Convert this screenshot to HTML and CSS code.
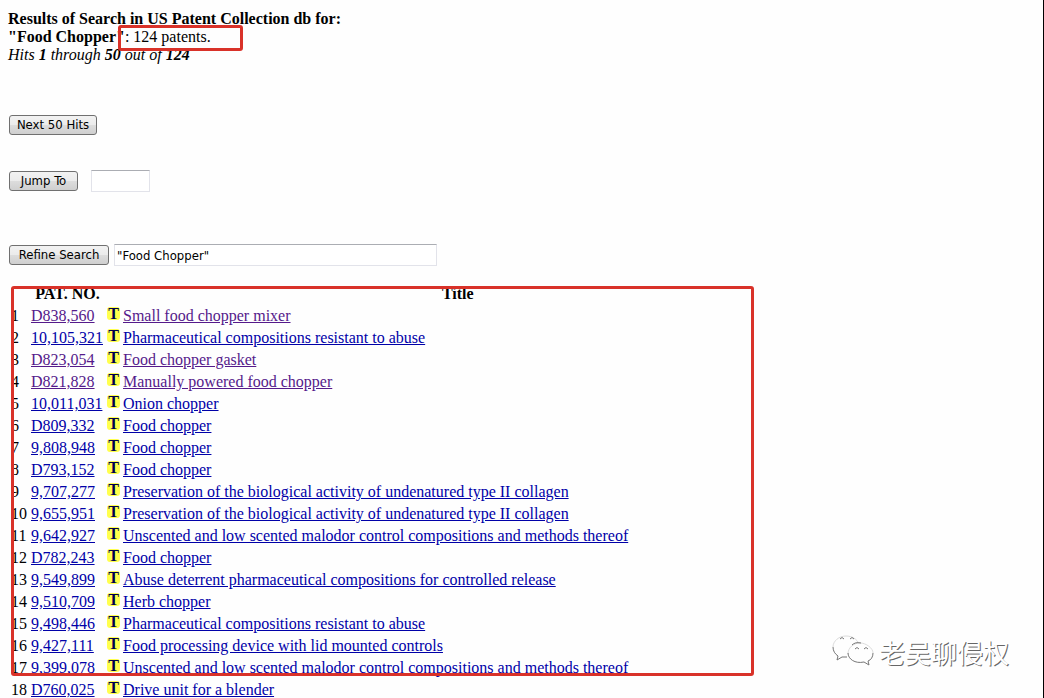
FILE: index.html
```
<!DOCTYPE html>
<html lang="en">

<head>
    <meta charset="UTF-8">
    <meta name="viewport" content="width=device-width, initial-scale=1.0">
    <title>Patent Database Search Results</title>
    <link rel="stylesheet" href="styles.css">
</head>

<body>
    <div class="summary">
        <strong>Results of Search in US Patent Collection db for:</strong><br>
        <strong>"Food Chopper"</strong><span class="count">: 124 patents.<span class="mark mark-count"></span></span><br>
        <em>Hits <strong>1</strong> through <strong>50</strong> out of <strong>124</strong></em>
    </div>

    <form class="search-form next-form">
        <button type="submit" class="next-button">Next 50 Hits</button>
    </form>
    <form class="search-form jump-form">
        <button type="submit" class="jump-button">Jump To</button>
        <input type="text" class="jump-input" name="start" aria-label="Jump to hit">
    </form>
    <form class="search-form refine-form">
        <button type="submit" class="refine-button">Refine Search</button>
        <input type="text" class="query-input" name="query" value="&quot;Food Chopper&quot;" aria-label="Refine search">
    </form>

    <div class="results">
        <table>
            <thead>
                <tr><th class="num"></th><th class="pat">PAT. NO.</th><th class="full"></th><th class="title">Title</th></tr>
            </thead>
            <tbody>
                <tr><td>1</td><td><a class="visited" href="#1">D838,560</a></td><td><span class="full-text">T</span></td><td><a class="visited" href="#1">Small food chopper mixer</a></td></tr>
                <tr><td>2</td><td><a href="#2">10,105,321</a></td><td><span class="full-text">T</span></td><td><a href="#2">Pharmaceutical compositions resistant to abuse</a></td></tr>
                <tr><td>3</td><td><a class="visited" href="#3">D823,054</a></td><td><span class="full-text">T</span></td><td><a class="visited" href="#3">Food chopper gasket</a></td></tr>
                <tr><td>4</td><td><a class="visited" href="#4">D821,828</a></td><td><span class="full-text">T</span></td><td><a class="visited" href="#4">Manually powered food chopper</a></td></tr>
                <tr><td>5</td><td><a href="#5">10,011,031</a></td><td><span class="full-text">T</span></td><td><a href="#5">Onion chopper</a></td></tr>
                <tr><td>6</td><td><a href="#6">D809,332</a></td><td><span class="full-text">T</span></td><td><a href="#6">Food chopper</a></td></tr>
                <tr><td>7</td><td><a href="#7">9,808,948</a></td><td><span class="full-text">T</span></td><td><a href="#7">Food chopper</a></td></tr>
                <tr><td>8</td><td><a href="#8">D793,152</a></td><td><span class="full-text">T</span></td><td><a href="#8">Food chopper</a></td></tr>
                <tr><td>9</td><td><a href="#9">9,707,277</a></td><td><span class="full-text">T</span></td><td><a href="#9">Preservation of the biological activity of undenatured type II collagen</a></td></tr>
                <tr><td>10</td><td><a href="#10">9,655,951</a></td><td><span class="full-text">T</span></td><td><a href="#10">Preservation of the biological activity of undenatured type II collagen</a></td></tr>
                <tr><td>11</td><td><a href="#11">9,642,927</a></td><td><span class="full-text">T</span></td><td><a href="#11">Unscented and low scented malodor control compositions and methods thereof</a></td></tr>
                <tr><td>12</td><td><a href="#12">D782,243</a></td><td><span class="full-text">T</span></td><td><a href="#12">Food chopper</a></td></tr>
                <tr><td>13</td><td><a href="#13">9,549,899</a></td><td><span class="full-text">T</span></td><td><a href="#13">Abuse deterrent pharmaceutical compositions for controlled release</a></td></tr>
                <tr><td>14</td><td><a href="#14">9,510,709</a></td><td><span class="full-text">T</span></td><td><a href="#14">Herb chopper</a></td></tr>
                <tr><td>15</td><td><a href="#15">9,498,446</a></td><td><span class="full-text">T</span></td><td><a href="#15">Pharmaceutical compositions resistant to abuse</a></td></tr>
                <tr><td>16</td><td><a href="#16">9,427,111</a></td><td><span class="full-text">T</span></td><td><a href="#16">Food processing device with lid mounted controls</a></td></tr>
                <tr><td>17</td><td><a href="#17">9,399,078</a></td><td><span class="full-text">T</span></td><td><a href="#17">Unscented and low scented malodor control compositions and methods thereof</a></td></tr>
                <tr><td>18</td><td><a href="#18">D760,025</a></td><td><span class="full-text">T</span></td><td><a href="#18">Drive unit for a blender</a></td></tr>
            </tbody>
        </table>
        <span class="mark mark-results"></span>
    </div>

    <div class="watermark">
        <svg width="42" height="34" viewBox="0 0 42 34" fill="none" aria-hidden="true">
            <g stroke="#dcdcdc" stroke-width="1">
                <path d="M27 9C25 4 20 1 14 1C7 1 1 6 1 12"/>
                <path d="M28 8C34 8 41 13 41 18M16 19C16 13 21 8 28 8"/>
            </g>
            <g stroke="#777" stroke-width="1">
                <path d="M1 12C1 16 3 19 6 21L5 25L10 22L15 22"/>
                <path d="M16 18C16 24 23 29 32 27L37 30L36 26C39 25 41 22 41 18M20 10C22 8 25 7 29 8"/>
                <path d="M8 4Q10 1 12 4M18 4Q20 1 22 4M23 14Q25 11 27 14M32 14Q34 11 36 14"/>
            </g>
        </svg>
        <span>老吴聊侵权</span>
    </div>
</body>

</html>
```

FILE: styles.css
```
html {
    background-color: #fefefe;
}

body {
    box-sizing: border-box;
    min-height: 100vh;
    margin: 0;
    padding: 10px 8px 0;
    border-right: 1px solid #000;
    font-family: "Liberation Serif", "Times New Roman", serif;
    font-size: 16px;
    line-height: 18px;
    color: #000;
}

.search-form {
    display: flex;
    align-items: center;
    height: 22px;
    padding-left: 1px;
}

.next-form {
    margin-top: 50px;
}

.jump-form {
    margin-top: 34px;
    gap: 13px;
}

.refine-form {
    margin-top: 52px;
    gap: 5px;
}

button,
input {
    box-sizing: border-box;
    font-family: "DejaVu Sans Condensed", Tahoma, sans-serif;
    font-size: 13px;
    color: #000;
}

button {
    height: 20px;
    padding: 0;
    border: 1px solid #707070;
    border-radius: 3px;
    background: linear-gradient(#f2f2f2 0%, #ebebeb 50%, #dddddd 50%, #cfcfcf 100%);
    line-height: 18px;
}

.next-button {
    width: 88px;
}

.jump-button {
    width: 69px;
}

.refine-button {
    width: 100px;
}

input {
    height: 22px;
    padding: 0 2px;
    border: 1px solid #e2e3ea;
    border-top-color: #abadb3;
    background-color: #fff;
}

.jump-input {
    width: 59px;
}

.query-input {
    width: 323px;
}

.results {
    position: relative;
    margin-top: 17px;
}

table {
    width: 76%;
    border-collapse: collapse;
    table-layout: fixed;
    line-height: 22px;
}

th,
td {
    height: 22px;
    padding: 0;
    text-align: left;
    white-space: nowrap;
}

th {
    text-align: center;
}

td:first-child {
    padding-left: 3px;
}

.num {
    width: 23px;
}

.pat {
    width: 73px;
}

.full {
    width: 19px;
}

.title {
    padding-left: 4px;
}

a {
    color: #0000a8;
}

a.visited {
    color: #551a8b;
}

.full-text {
    display: block;
    width: 13px;
    height: 13px;
    margin: 0 0 5px 3px;
    border-radius: 3px;
    background-color: #ffff4d;
    color: #00004d;
    font-size: 16px;
    font-weight: bold;
    line-height: 13px;
    text-align: center;
}

/* red highlight boxes */
.mark {
    position: absolute;
    box-sizing: border-box;
    border: 3px solid #d93229;
    border-radius: 3px;
}

.count {
    position: relative;
}

.mark-count {
    top: -3px;
    left: -7px;
    width: 125px;
    height: 26px;
}

.mark-results {
    top: 3px;
    left: 3px;
    width: 743px;
    height: 390px;
}

.watermark {
    position: absolute;
    right: 35px;
    bottom: 28px;
    display: flex;
    align-items: center;
    gap: 5px;
    color: #fff;
    font-family: "Noto Sans CJK SC", sans-serif;
    font-size: 26px;
    line-height: 36px;
    text-shadow: 1px 1px 0 #666;
}
```
